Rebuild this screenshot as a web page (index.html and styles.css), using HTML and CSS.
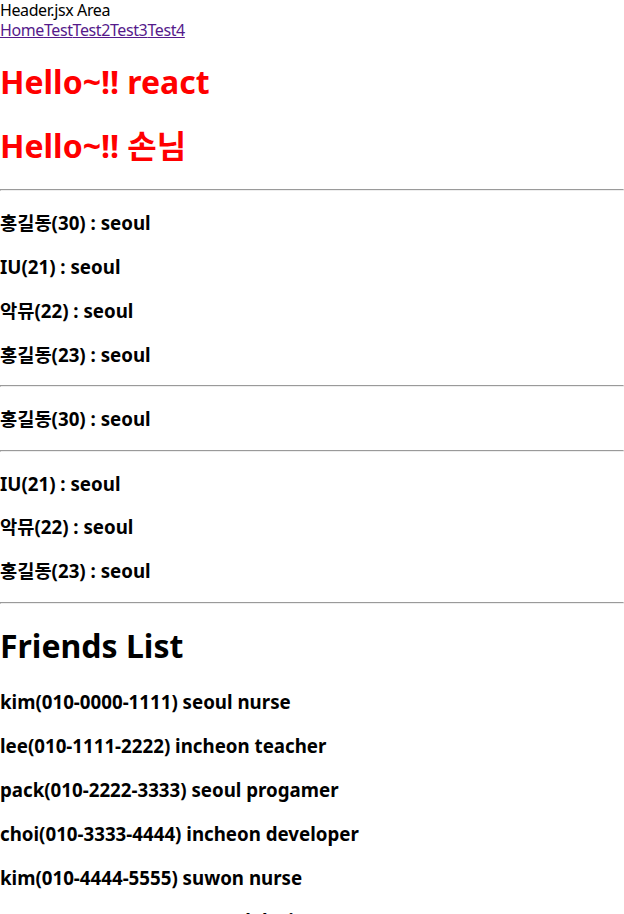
FILE: index.html
```html
<!DOCTYPE html>
<html lang="ko">
<head>
    <meta charset="UTF-8">
    <title>React App</title>
    <link rel="stylesheet" href="styles.css">
</head>
<body>
    <div id="root">
        <div class="header">Header.jsx Area</div>
        <nav class="nav">
            <a href="#">Home</a><a href="#">Test</a><a href="#">Test2</a><a href="#">Test3</a><a href="#">Test4</a>
        </nav>
        <h1 class="hello">Hello~!! react</h1>
        <h1 class="hello">Hello~!! 손님</h1>
        <hr>
        <h3>홍길동(30) : seoul</h3>
        <h3>IU(21) : seoul</h3>
        <h3>악뮤(22) : seoul</h3>
        <h3>홍길동(23) : seoul</h3>
        <hr>
        <h3>홍길동(30) : seoul</h3>
        <hr>
        <h3>IU(21) : seoul</h3>
        <h3>악뮤(22) : seoul</h3>
        <h3>홍길동(23) : seoul</h3>
        <hr>
        <h1>Friends List</h1>
        <h3>kim(010-0000-1111) seoul nurse</h3>
        <h3>lee(010-1111-2222) incheon teacher</h3>
        <h3>pack(010-2222-3333) seoul progamer</h3>
        <h3>choi(010-3333-4444) incheon developer</h3>
        <h3>kim(010-4444-5555) suwon nurse</h3>
        <h3>moon(010-5555-6666) seoul designer</h3>
    </div>
</body>
</html>
```

FILE: styles.css
```css
body {
    margin: 0;
    font-family: "Noto Sans", "Noto Sans CJK KR", sans-serif;
    line-height: 1.33;
    color: #000;
}
.header, .nav {
    line-height: 1.25;
    letter-spacing: -0.4px;
}
.nav a {
    color: #551a8b;
}
h1 {
    font-size: 32px;
    margin: 21.44px 0;
}
.hello {
    color: red;
}
h3 {
    font-size: 18.72px;
    line-height: 1.34;
    margin: 18.72px 0;
}
hr {
    margin: 8px 0;
}
```
